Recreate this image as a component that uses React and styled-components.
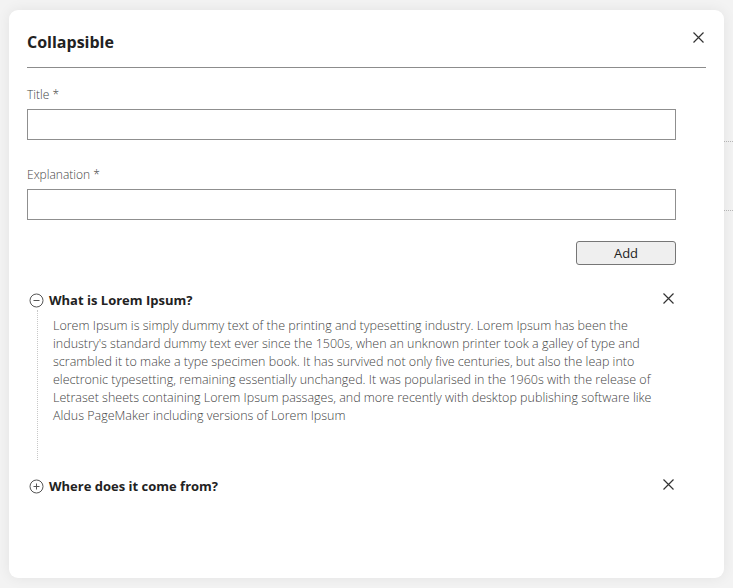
import React, { useState } from "react";
import styled, { createGlobalStyle } from "styled-components";

const GlobalStyle = createGlobalStyle`
  html, body {
    margin: 0;
    padding: 0;
    background: #f3f3f3;
    font-family: "Open Sans", "Noto Sans", sans-serif;
    color: #333;
  }
`;

const Page = styled.div`
  position: relative;
  width: 733px;
  height: 588px;
  overflow: hidden;
`;

const BackRows = styled.div`
  display: flex;
  flex-direction: column;
  padding: 73px 0 0 40px;
`;

const BackRow = styled.div`
  height: 68px;
  border-bottom: 1px dotted #b8b8b8;
`;

const Modal = styled.div`
  position: absolute;
  left: 9px;
  top: 10px;
  width: 715px;
  height: 568px;
  box-sizing: border-box;
  background: #fff;
  border-radius: 9px;
  box-shadow: 0 0 14px rgba(0, 0, 0, 0.07);
  padding: 0 18px;
`;

const Header = styled.div`
  display: flex;
  justify-content: space-between;
  align-items: flex-start;
  padding: 21px 0 14px;
  border-bottom: 1px solid #8c8c8c;
`;

const Heading = styled.h2`
  margin: 0;
  font-size: 16px;
  line-height: 22px;
  font-weight: 700;
  color: #222;
`;

const IconButton = styled.button`
  display: flex;
  align-items: center;
  justify-content: center;
  border: 0;
  background: none;
  padding: 0;
  margin: ${(p) => p.$margin || "0"};
  cursor: pointer;
  color: #333;
`;

const Body = styled.div`
  width: 649px;
`;

const Field = styled.div`
  display: flex;
  flex-direction: column;
  gap: 5px;
  margin-top: ${(p) => p.$top}px;
`;

const Label = styled.label`
  font-size: 12px;
  line-height: 18px;
  font-weight: 300;
  color: #444;
`;

const Input = styled.input`
  box-sizing: border-box;
  width: 100%;
  height: 31px;
  border: 1px solid #8f8f8f;
  border-radius: 0;
  padding: 0 8px;
  font: inherit;
  outline: none;
`;

const Actions = styled.div`
  display: flex;
  justify-content: flex-end;
  margin-top: 21px;
`;

const AddButton = styled.button`
  box-sizing: border-box;
  width: 100px;
  height: 24px;
  background: #efefef;
  border: 1px solid #767676;
  border-radius: 3px;
  font-family: "Open Sans", sans-serif;
  font-size: 13px;
  color: #222;
  padding: 0;
`;

const Items = styled.div`
  display: flex;
  flex-direction: column;
  margin-top: 26px;
`;

const Item = styled.div`
  display: flex;
  flex-direction: column;
  & + & {
    margin-top: 17px;
  }
`;

const ItemHead = styled.div`
  display: flex;
  align-items: center;
  height: 18px;
`;

const Toggle = styled.button`
  display: flex;
  align-items: center;
  border: 0;
  background: none;
  padding: 0 0 0 2px;
  gap: 5px;
  cursor: pointer;
  font-family: inherit;
  flex: 1;
  text-align: left;
`;

const ItemTitle = styled.span`
  font-size: 13px;
  font-weight: 700;
  color: #222;
`;

const ItemBody = styled.div`
  margin: 1px 0 0 10px;
  padding: 7px 0 35px 15px;
  border-left: 1px dotted #c8c8c8;
  font-size: 12.5px;
  line-height: 18px;
  font-weight: 300;
  color: #444;
`;

const CloseIcon = ({ size = 11 }) => (
  <svg width={size} height={size} viewBox="0 0 11 11">
    <path d="M0.5 0.5 L10.5 10.5 M10.5 0.5 L0.5 10.5" stroke="#333" strokeWidth="1.2" fill="none" />
  </svg>
);

const CircleIcon = ({ open }) => (
  <svg width="15" height="15" viewBox="0 0 15 15">
    <circle cx="7.5" cy="7.5" r="6.5" stroke="#555" strokeWidth="1" fill="none" />
    <path d="M4.5 7.5 H10.5" stroke="#555" strokeWidth="1" />
    {!open && <path d="M7.5 4.5 V10.5" stroke="#555" strokeWidth="1" />}
  </svg>
);

const items = [
  {
    title: "What is Lorem Ipsum?",
    text:
      "Lorem Ipsum is simply dummy text of the printing and typesetting industry. Lorem Ipsum has been the industry's standard dummy text ever since the 1500s, when an unknown printer took a galley of type and scrambled it to make a type specimen book. It has survived not only five centuries, but also the leap into electronic typesetting, remaining essentially unchanged. It was popularised in the 1960s with the release of Letraset sheets containing Lorem Ipsum passages, and more recently with desktop publishing software like Aldus PageMaker including versions of Lorem Ipsum"
  },
  {
    title: "Where does it come from?",
    text:
      "Contrary to popular belief, Lorem Ipsum is not simply random text. It has roots in a piece of classical Latin literature from 45 BC, making it over 2000 years old."
  }
];

const App = () => {
  const [open, setOpen] = useState([true, false]);

  const toggle = (i) => setOpen(open.map((o, j) => (j === i ? !o : o)));

  return (
    <Page>
      <GlobalStyle />
      <BackRows>
        <BackRow />
        <BackRow />
      </BackRows>
      <Modal>
        <Header>
          <Heading>Collapsible</Heading>
          <IconButton $margin="1px 2px 0 0">
            <CloseIcon />
          </IconButton>
        </Header>
        <Body>
          <Field $top={18}>
            <Label>Title *</Label>
            <Input />
          </Field>
          <Field $top={26}>
            <Label>Explanation *</Label>
            <Input />
          </Field>
          <Actions>
            <AddButton>Add</AddButton>
          </Actions>
          <Items>
            {items.map((it, i) => (
              <Item key={it.title}>
                <ItemHead>
                  <Toggle onClick={() => toggle(i)}>
                    <CircleIcon open={open[i]} />
                    <ItemTitle>{it.title}</ItemTitle>
                  </Toggle>
                  <IconButton $margin="-4px 2px 0 0">
                    <CloseIcon />
                  </IconButton>
                </ItemHead>
                {open[i] && <ItemBody>{it.text}</ItemBody>}
              </Item>
            ))}
          </Items>
        </Body>
      </Modal>
    </Page>
  );
};

export default App;
